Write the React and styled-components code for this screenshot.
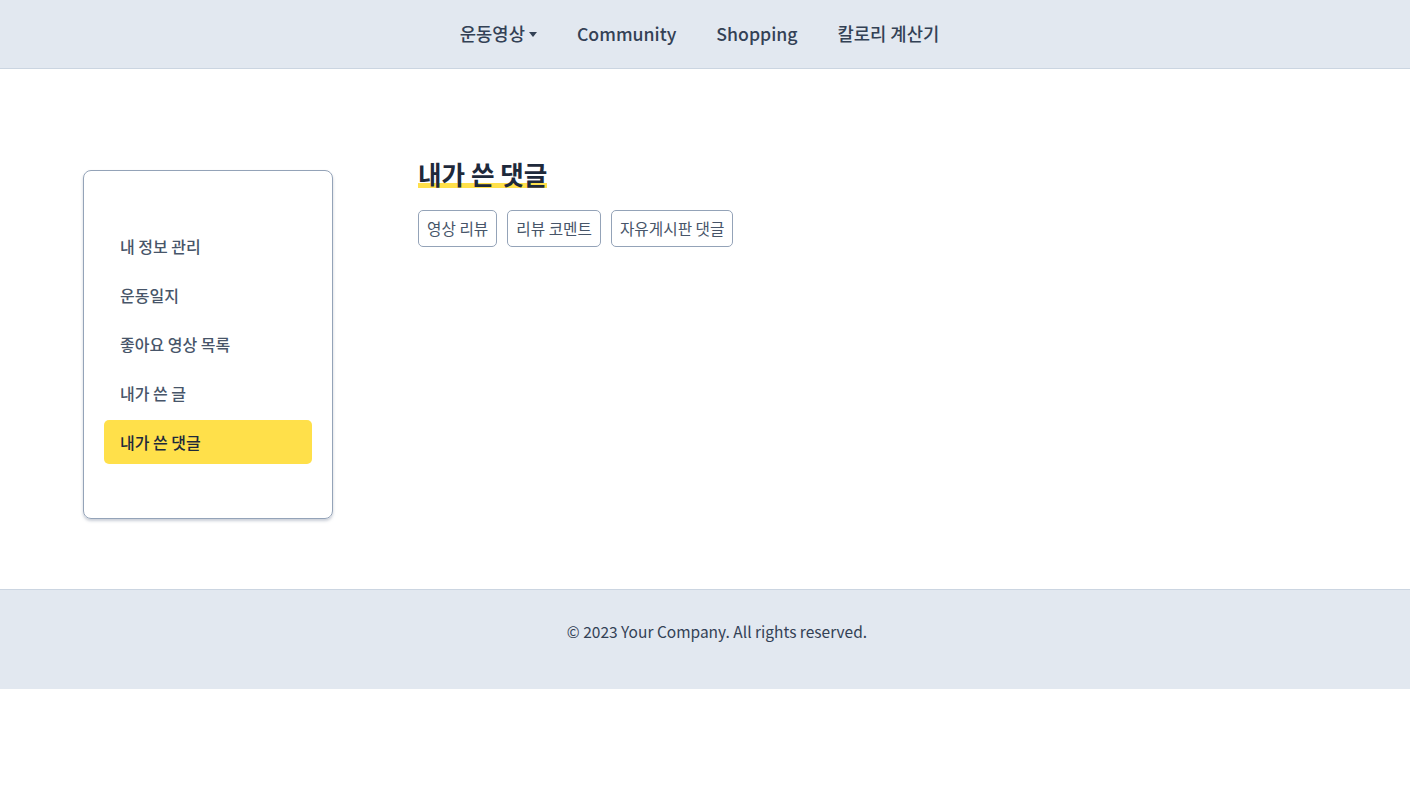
import React from "react";
import styled, { createGlobalStyle } from "styled-components";

const Global = createGlobalStyle`
  html, body { margin: 0; padding: 0; background: #fff; }
  body { font-family: "Noto Sans CJK KR", "Noto Sans", sans-serif; color: #334155; }
  * { box-sizing: border-box; }
`;

const Header = styled.header`
  height: 69px;
  background: #e2e8f0;
  border-bottom: 1px solid #cbd5e1;
  display: flex;
  align-items: center;
  justify-content: center;
  padding-right: 11px;
`;

const Nav = styled.nav`
  display: flex;
  align-items: center;
  gap: 40px;
  margin-top: -2px;
`;

const NavItem = styled.a`
  font-size: 17.7px;
  font-weight: 500;
  color: #334155;
  text-decoration: none;
  display: flex;
  align-items: center;
  gap: 4px;
  cursor: pointer;
`;

const Caret = styled.span`
  width: 0;
  height: 0;
  border-left: 4.5px solid transparent;
  border-right: 4.5px solid transparent;
  border-top: 5px solid #334155;
  margin-top: 2px;
`;

const Main = styled.main`
  height: 520px;
  display: flex;
  align-items: flex-start;
  padding: 101px 0 0 83px;
  gap: 85px;
`;

const Sidebar = styled.aside`
  width: 250px;
  height: 349px;
  border: 1px solid #94a3b8;
  border-radius: 8px;
  box-shadow: 0 2px 3px rgba(100, 116, 139, 0.35);
  padding: 53px 20px 0 20px;
  display: flex;
  flex-direction: column;
  gap: 5px;
`;

const SideItem = styled.div`
  height: 44px;
  display: flex;
  align-items: center;
  padding-left: 16px;
  border-radius: 5px;
  font-size: 16px;
  font-weight: 500;
  color: ${(p) => (p.$active ? "#1e293b" : "#475569")};
  background: ${(p) => (p.$active ? "#ffe04a" : "transparent")};
`;

const Content = styled.section`
  display: flex;
  flex-direction: column;
  gap: 17px;
  margin-top: -15px;
`;

const Title = styled.h2`
  margin: 0;
  font-size: 25.6px;
  font-weight: 700;
  color: #1e293b;
  align-self: flex-start;
  line-height: 38px;
  background: linear-gradient(transparent 74%, #ffe04a 74%, #ffe04a 86%, transparent 86%);
`;

const Tabs = styled.div`
  display: flex;
  gap: 10px;
`;

const Tab = styled.button`
  height: 37px;
  padding: 0 8px;
  border: 1px solid #94a3b8;
  border-radius: 5px;
  background: #fff;
  font-family: inherit;
  font-size: 15.7px;
  font-weight: 400;
  color: #475569;
`;

const Footer = styled.footer`
  height: 100px;
  background: #e2e8f0;
  border-top: 1px solid #cbd5e1;
  display: flex;
  align-items: center;
  justify-content: center;
  font-size: 15.5px;
  color: #334155;
  padding: 0 0 18px 24px;
`;

const sideItems = ["내 정보 관리", "운동일지", "좋아요 영상 목록", "내가 쓴 글", "내가 쓴 댓글"];

export default function App() {
  return (
    <>
      <Global />
      <Header>
        <Nav>
          <NavItem>
            운동영상
            <Caret />
          </NavItem>
          <NavItem>Community</NavItem>
          <NavItem>Shopping</NavItem>
          <NavItem>칼로리 계산기</NavItem>
        </Nav>
      </Header>
      <Main>
        <Sidebar>
          {sideItems.map((t) => (
            <SideItem key={t} $active={t === "내가 쓴 댓글"}>
              {t}
            </SideItem>
          ))}
        </Sidebar>
        <Content>
          <Title>내가 쓴 댓글</Title>
          <Tabs>
            <Tab>영상 리뷰</Tab>
            <Tab>리뷰 코멘트</Tab>
            <Tab>자유게시판 댓글</Tab>
          </Tabs>
        </Content>
      </Main>
      <Footer>© 2023 Your Company. All rights reserved.</Footer>
    </>
  );
}
